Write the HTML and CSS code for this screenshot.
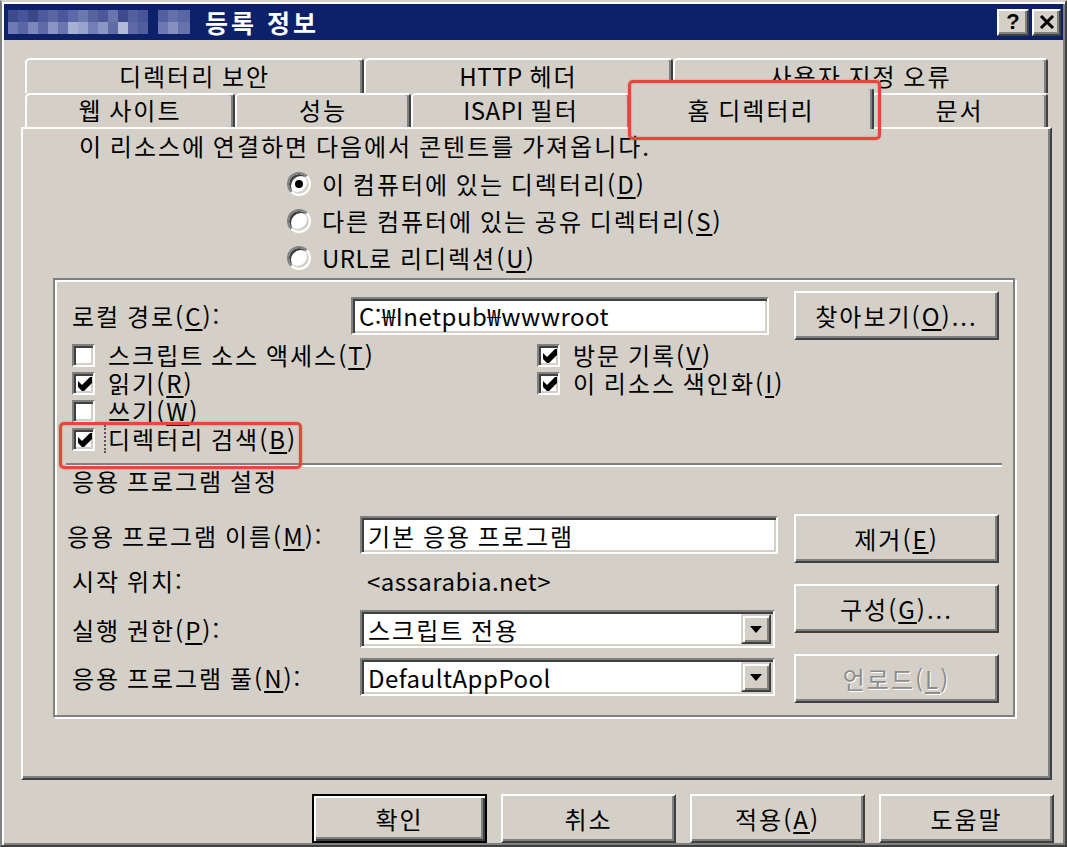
FILE: index.html
```html
<!DOCTYPE html>
<html lang="ko">
<head>
    <meta charset="UTF-8">
    <meta name="viewport" content="width=device-width, initial-scale=1.0">
    <title>등록 정보</title>
    <link rel="stylesheet" href="styles.css">
</head>
<body>

<div class="window">
    <div class="titlebar">
        <!-- blurred site name -->
        <svg class="mosaic" width="182" height="24" viewBox="0 0 182 24">
            <rect x="0" y="0" width="10" height="12" fill="#3d4b8c"/>
            <rect x="10" y="0" width="10" height="12" fill="#46549a"/>
            <rect x="20" y="0" width="10" height="12" fill="#3a4888"/>
            <rect x="30" y="0" width="10" height="12" fill="#4c5a9c"/>
            <rect x="40" y="0" width="10" height="12" fill="#5a66a4"/>
            <rect x="50" y="0" width="10" height="12" fill="#4a579a"/>
            <rect x="60" y="0" width="10" height="12" fill="#5c68a8"/>
            <rect x="70" y="0" width="10" height="12" fill="#6c78b0"/>
            <rect x="80" y="0" width="10" height="12" fill="#56639f"/>
            <rect x="90" y="0" width="10" height="12" fill="#4b5899"/>
            <rect x="100" y="0" width="10" height="12" fill="#6a75ae"/>
            <rect x="110" y="0" width="10" height="12" fill="#3d4a8b"/>
            <rect x="120" y="0" width="10" height="12" fill="#5260a0"/>
            <rect x="130" y="0" width="10" height="12" fill="#48559a"/>
            <rect x="150" y="0" width="10" height="12" fill="#5360a0"/>
            <rect x="160" y="0" width="10" height="12" fill="#6470aa"/>
            <rect x="170" y="0" width="12" height="12" fill="#5866a4"/>
            <rect x="0" y="12" width="10" height="12" fill="#6e7ab4"/>
            <rect x="10" y="12" width="10" height="12" fill="#5a67a6"/>
            <rect x="20" y="12" width="10" height="12" fill="#7c87bc"/>
            <rect x="30" y="12" width="10" height="12" fill="#5f6ba8"/>
            <rect x="40" y="12" width="10" height="12" fill="#8a94c4"/>
            <rect x="50" y="12" width="10" height="12" fill="#6a76b0"/>
            <rect x="60" y="12" width="10" height="12" fill="#a7afd2"/>
            <rect x="70" y="12" width="10" height="12" fill="#9aa3cc"/>
            <rect x="80" y="12" width="10" height="12" fill="#7380b8"/>
            <rect x="90" y="12" width="10" height="12" fill="#8c96c4"/>
            <rect x="100" y="12" width="10" height="12" fill="#606ca8"/>
            <rect x="110" y="12" width="10" height="12" fill="#b4bbd8"/>
            <rect x="120" y="12" width="10" height="12" fill="#5d69a6"/>
            <rect x="130" y="12" width="10" height="12" fill="#4f5c9e"/>
            <rect x="150" y="12" width="10" height="12" fill="#6d78b2"/>
            <rect x="160" y="12" width="10" height="12" fill="#8690c0"/>
            <rect x="170" y="12" width="12" height="12" fill="#6672ac"/>
        </svg>
        <span class="title">등록 정보</span>
        <div class="caption-btns">
            <span class="cap">?</span>
            <span class="cap">
                <svg width="16" height="14" viewBox="0 0 16 14">
                    <path d="M2 1 L14 13 M14 1 L2 13" stroke="#000" stroke-width="3" fill="none"/>
                </svg>
            </span>
        </div>
    </div>

    <div class="content">
        <div class="tab-row">
            <div class="tab" style="width: 339px">디렉터리 보안</div>
            <div class="tab" style="width: 309px"><span class="latin">HTTP</span>&nbsp;헤더</div>
            <div class="tab" style="width: 375px">사용자 지정 오류</div>
        </div>
        <div class="tab-row">
            <div class="tab" style="width: 210px">웹 사이트</div>
            <div class="tab" style="width: 176px">성능</div>
            <div class="tab" style="width: 220px"><span class="latin">ISAPI</span>&nbsp;필터</div>
            <div class="tab active" style="width: 246px">홈 디렉터리</div>
            <div class="tab" style="width: 177px">문서</div>
        </div>

        <div class="panel">
            <p class="intro">이 리소스에 연결하면 다음에서 콘텐트를 가져옵니다.</p>
            <div class="radios">
                <div class="radio-row"><span class="radio checked"></span>이 컴퓨터에 있는 디렉터리(<u>D</u>)</div>
                <div class="radio-row"><span class="radio"></span>다른 컴퓨터에 있는 공유 디렉터리(<u>S</u>)</div>
                <div class="radio-row"><span class="radio"></span><span class="latin">URL</span>로 리디렉션(<u>U</u>)</div>
            </div>

            <div class="group">
                <div class="path-row">
                    <span class="path-label">로컬 경로(<u>C</u>):</span>
                    <div class="textbox path latin">C:₩Inetpub₩wwwroot</div>
                    <div class="btn">찾아보기(<u>O</u>)...</div>
                </div>

                <div class="checks">
                    <div class="check-col left">
                        <div class="check-row"><span class="cb"></span>스크립트 소스 액세스(<u>T</u>)</div>
                        <div class="check-row">
                            <span class="cb"><svg width="14" height="14" viewBox="0 0 14 14"><path d="M0 4 L4 8 L12 0 L14 0 L14 6 L6 14 L4 14 L0 10 Z"/></svg></span>읽기(<u>R</u>)
                        </div>
                        <div class="check-row"><span class="cb"></span>쓰기(<u>W</u>)</div>
                        <div class="check-row marked">
                            <span class="cb"><svg width="14" height="14" viewBox="0 0 14 14"><path d="M0 4 L4 8 L12 0 L14 0 L14 6 L6 14 L4 14 L0 10 Z"/></svg></span><span class="focus">디렉터리 검색(<u>B</u>)</span>
                        </div>
                    </div>
                    <div class="check-col">
                        <div class="check-row">
                            <span class="cb"><svg width="14" height="14" viewBox="0 0 14 14"><path d="M0 4 L4 8 L12 0 L14 0 L14 6 L6 14 L4 14 L0 10 Z"/></svg></span>방문 기록(<u>V</u>)
                        </div>
                        <div class="check-row">
                            <span class="cb"><svg width="14" height="14" viewBox="0 0 14 14"><path d="M0 4 L4 8 L12 0 L14 0 L14 6 L6 14 L4 14 L0 10 Z"/></svg></span>이 리소스 색인화(<u>I</u>)
                        </div>
                    </div>
                </div>

                <div class="separator"></div>
                <div class="section-title">응용 프로그램 설정</div>

                <div class="app">
                    <div class="app-fields">
                        <div class="field-row name">
                            <span class="field-label wide">응용 프로그램 이름(<u>M</u>):</span>
                            <div class="textbox app-name">기본 응용 프로그램</div>
                        </div>
                        <div class="field-row start">
                            <span class="field-label">시작 위치:</span>
                            <span class="field-value latin">&lt;assarabia.net&gt;</span>
                        </div>
                        <div class="field-row perm">
                            <span class="field-label">실행 권한(<u>P</u>):</span>
                            <div class="textbox combo">
                                <span class="combo-text">스크립트 전용</span>
                                <span class="drop"><svg width="12" height="7" viewBox="0 0 12 7"><path d="M0 0 H12 L6 7 Z"/></svg></span>
                            </div>
                        </div>
                        <div class="field-row pool">
                            <span class="field-label">응용 프로그램 풀(<u>N</u>):</span>
                            <div class="textbox combo">
                                <span class="combo-text latin">DefaultAppPool</span>
                                <span class="drop"><svg width="12" height="7" viewBox="0 0 12 7"><path d="M0 0 H12 L6 7 Z"/></svg></span>
                            </div>
                        </div>
                    </div>
                    <div class="app-buttons">
                        <div class="btn">제거(<u>E</u>)</div>
                        <div class="btn">구성(<u>G</u>)...</div>
                        <div class="btn disabled">언로드(<u>L</u>)</div>
                    </div>
                </div>
            </div>
        </div>

        <div class="dialog-buttons">
            <div class="btn default">확인</div>
            <div class="btn">취소</div>
            <div class="btn">적용(<u>A</u>)</div>
            <div class="btn">도움말</div>
        </div>
    </div>
</div>

</body>
</html>
```

FILE: styles.css
```css
* {
    box-sizing: border-box;
}
body {
    margin: 0;
    background-color: #d4d0c8;
    font-family: "Noto Sans CJK KR", "Noto Sans", sans-serif;
    font-size: 24px;
    letter-spacing: 2px;
    word-spacing: -2px;
    color: #000;
}
u {
    text-underline-offset: 3px;
}
.latin {
    letter-spacing: 0.5px;
}

/* window frame */
.window {
    width: 1067px;
    height: 847px;
    padding: 2px;
    border: 2px solid;
    border-color: #d4d0c8 #404040 #404040 #808080;
    box-shadow: inset 2px 2px 0 #fff, inset -2px -2px 0 #808080;
    background-color: #d4d0c8;
}
.titlebar {
    height: 36px;
    display: flex;
    align-items: center;
    padding: 0 2px 0 4px;
    background-color: #0c216a;
}
.mosaic {
    display: block;
}
.title {
    margin-left: 15px;
    color: #fff;
    font-weight: bold;
    font-size: 25px;
    letter-spacing: 3px;
    word-spacing: 0;
}
.caption-btns {
    margin-left: auto;
    display: flex;
    gap: 3px;
}
.cap {
    width: 32px;
    height: 27px;
    display: flex;
    align-items: center;
    justify-content: center;
    background-color: #d4d0c8;
    border: 2px solid;
    border-color: #fff #404040 #404040 #fff;
    box-shadow: inset -2px -2px 0 #808080;
    font-weight: bold;
    font-size: 22px;
    font-family: "Liberation Sans", Arial, sans-serif;
    letter-spacing: 0;
}
.cap:last-child {
    width: 29px;
}

/* tabs */
.content {
    padding: 18px 11px 0 17px;
}
.tab-row {
    display: flex;
    height: 35px;
    margin: 0 4px;
}
.tab-row + .tab-row {
    height: 34px;
}
.tab {
    display: flex;
    align-items: center;
    justify-content: center;
    padding-bottom: 3px;
    background-color: #d4d0c8;
    border-top: 2px solid #fff;
    border-left: 2px solid #fff;
    border-right: 2px solid #404040;
    border-radius: 5px 4px 0 0;
    box-shadow: inset -2px 0 0 #808080;
    white-space: nowrap;
}
.tab.active {
    margin: -6px -3px -2px;
    position: relative;
    z-index: 1;
    padding-bottom: 0;
}
/* gray patch between the marker and the tab top */
.tab.active::before {
    content: "";
    position: absolute;
    top: -8px;
    left: -1px;
    right: -8px;
    height: 8px;
    background-color: #d4d0c8;
}
.tab.active::after {
    content: "";
    position: absolute;
    top: -9px;
    left: -2px;
    right: -9px;
    bottom: -11px;
    border: 3px solid #e8453b;
    border-radius: 5px;
    box-shadow: 0 0 2px rgba(232, 69, 59, 0.6), inset 0 0 2px rgba(232, 69, 59, 0.6);
}

/* tab page */
.panel {
    height: 653px;
    border: 2px solid;
    border-color: #fff #404040 #404040 #fff;
    box-shadow: inset -2px -2px 0 #808080;
}
.intro {
    margin: 0;
    padding-left: 56px;
    line-height: 34px;
}
.radios {
    margin: 2px 0 0 264px;
}
.radio-row {
    height: 37px;
    display: flex;
    align-items: center;
}
.radio {
    width: 24px;
    height: 24px;
    margin-right: 11px;
    border-radius: 50%;
    border: 2px solid;
    border-color: #808080 #fff #fff #808080;
    background-color: #fff;
    box-shadow: inset 2px 2px 0 #404040, inset -2px -2px 0 #d4d0c8;
    display: flex;
    align-items: center;
    justify-content: center;
}
.radio.checked::after {
    content: "";
    width: 8px;
    height: 8px;
    border-radius: 50%;
    background-color: #000;
}

/* group frame */
.group {
    margin: 2px 0 0 30px;
    width: 962px;
    height: 439px;
    padding: 11px 14px 0 17px;
    border: 2px solid #808080;
    box-shadow: inset 2px 2px 0 #fff, 2px 2px 0 #fff;
}
.path-row {
    display: flex;
    align-items: center;
    height: 49px;
}
.path-label {
    width: 279px;
}
.textbox {
    height: 38px;
    display: flex;
    align-items: center;
    padding: 0 6px;
    background-color: #fff;
    border: 2px solid;
    border-color: #808080 #fff #fff #808080;
    box-shadow: inset 2px 2px 0 #404040, inset -2px -2px 0 #d4d0c8;
    white-space: nowrap;
}
.textbox.path {
    width: 418px;
    margin-right: 25px;
}
.btn {
    width: 205px;
    height: 49px;
    display: flex;
    align-items: center;
    justify-content: center;
    background-color: #d4d0c8;
    border: 2px solid;
    border-color: #fff #404040 #404040 #fff;
    box-shadow: inset -2px -2px 0 #808080;
    white-space: nowrap;
}
.btn.disabled {
    color: #8c8c8c;
    text-shadow: 1px 1px 0 #fff;
}

/* checkboxes */
.checks {
    display: flex;
    margin-top: 1px;
}
.check-col.left {
    width: 465px;
}
.check-row {
    height: 28px;
    line-height: 28px;
    display: flex;
    align-items: center;
    white-space: nowrap;
}
.check-row.marked {
    position: relative;
    width: fit-content;
}
.check-row.marked::after {
    content: "";
    position: absolute;
    top: -3px;
    bottom: -16px;
    left: -13px;
    right: -5px;
    border: 3px solid #e8453b;
    border-radius: 5px;
    box-shadow: 0 0 2px rgba(232, 69, 59, 0.6), inset 0 0 2px rgba(232, 69, 59, 0.6);
}
.cb {
    width: 23px;
    height: 23px;
    margin-right: 13px;
    background-color: #fff;
    border: 2px solid;
    border-color: #808080 #fff #fff #808080;
    box-shadow: inset 2px 2px 0 #404040, inset -2px -2px 0 #d4d0c8;
    display: flex;
    align-items: center;
    justify-content: center;
    flex: none;
}
.cb svg {
    display: block;
    margin: 2px 0 0 2px;
}
.focus {
    border-left: 2px dotted #555;
    margin-left: -4px;
    padding-left: 2px;
}
.separator {
    margin: 10px -3px 0 -6px;
    height: 4px;
    border-top: 2px solid #808080;
    border-bottom: 2px solid #fff;
}
.section-title {
    height: 28px;
    line-height: 28px;
}

/* application settings */
.app {
    display: flex;
    gap: 16px;
    margin-top: 19px;
}
.app-fields {
    width: 706px;
    padding-top: 2px;
}
.field-row {
    display: flex;
    align-items: center;
    height: 38px;
    white-space: nowrap;
}
.field-label {
    width: 288px;
}
.field-label.wide {
    width: 293px;
    margin-left: -5px;
}
.field-row.start {
    margin-top: 7px;
}
.field-row.perm {
    margin-top: 11px;
}
.field-row.pool {
    margin-top: 10px;
}
.field-value {
    padding-left: 7px;
}
.textbox.app-name {
    width: 418px;
}
.textbox.combo {
    width: 415px;
    padding-right: 2px;
}
.combo-text {
    flex: 1;
}
.drop {
    width: 30px;
    height: 30px;
    display: flex;
    align-items: center;
    justify-content: center;
    background-color: #d4d0c8;
    border: 2px solid;
    border-color: #d4d0c8 #404040 #404040 #d4d0c8;
    box-shadow: inset 2px 2px 0 #fff, inset -2px -2px 0 #808080;
}
.app-buttons {
    display: flex;
    flex-direction: column;
    gap: 21px;
}

/* dialog buttons */
.dialog-buttons {
    display: flex;
    justify-content: flex-end;
    gap: 14px;
    margin: 14px -2px 0 0;
}
.dialog-buttons .btn {
    width: 175px;
}
.btn.default {
    border-color: #000;
    box-shadow: inset 2px 2px 0 #fff, inset -2px -2px 0 #404040, inset -4px -4px 0 #808080;
}
```
